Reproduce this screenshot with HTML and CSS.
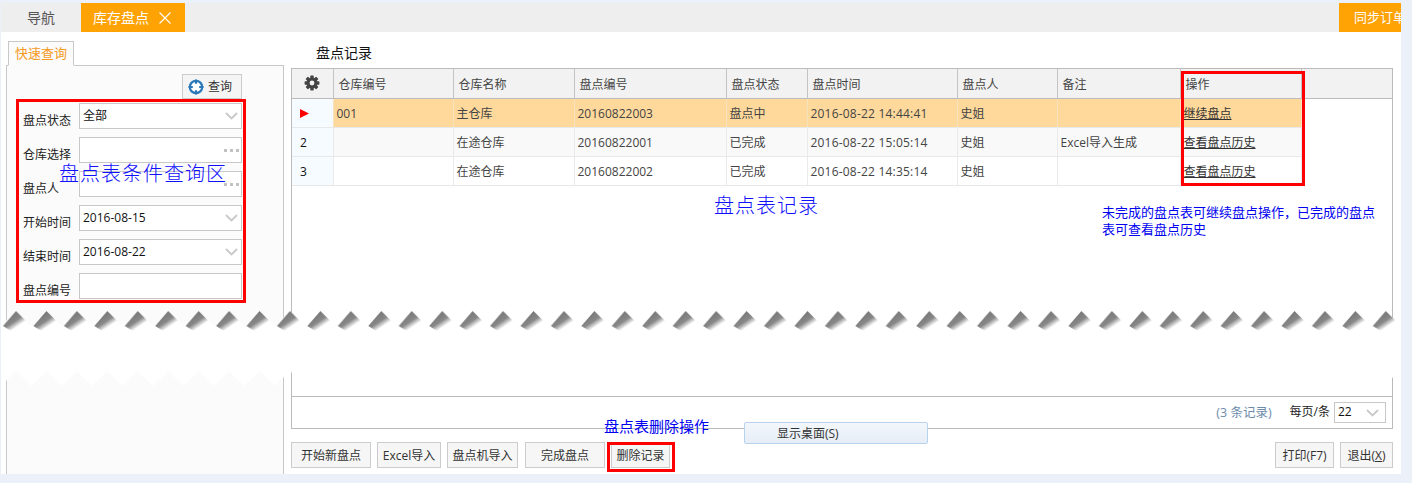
FILE: index.html
```html
<!DOCTYPE html>
<html lang="zh">
<head>
<meta charset="utf-8">
<title>库存盘点</title>
<link rel="stylesheet" href="styles.css">
</head>
<body>
<div class="app">
  <div class="tabbar">
    <div class="tab">导航</div>
    <div class="tab tab-active">库存盘点
      <svg class="tab-close" width="12" height="12" viewBox="0 0 12 12"><path d="M.5.5l11 11M11.5.5l-11 11" stroke="#fff" stroke-width="1.1" fill="none"/></svg>
    </div>
    <div class="tab-sync">同步订单</div>
  </div>
  <div class="main">
    <div class="side">
      <div class="side-tab">快速查询</div>
      <div class="side-panel">
        <div class="query-row">
          <div class="query-btn">
            <svg width="16" height="16" viewBox="0 0 16 16"><circle cx="8" cy="8" r="6.200" fill="#fff" stroke="#2a78b8" stroke-width="2.200"/><path d="M8 .5v4.300M8 11.200v4.300M.5 8h4.300M11.200 8h4.300" stroke="#2a78b8" stroke-width="2.200"/></svg>
            <span class="query-label">查询</span>
          </div>
        </div>
        <div class="form">
          <div class="field"><label>盘点状态</label><div class="input">全部<svg class="chev" width="13" height="8" viewBox="0 0 13 8"><path d="M1 1l5.500 5.500L12 1" stroke="#c9c9c9" stroke-width="1.800" fill="none"/></svg></div></div>
          <div class="field"><label>仓库选择</label><div class="input"><span class="dots"></span></div></div>
          <div class="field"><label>盘点人</label><div class="input"><span class="dots"></span></div></div>
          <div class="field"><label>开始时间</label><div class="input">2016-08-15<svg class="chev" width="13" height="8" viewBox="0 0 13 8"><path d="M1 1l5.500 5.500L12 1" stroke="#c9c9c9" stroke-width="1.800" fill="none"/></svg></div></div>
          <div class="field"><label>结束时间</label><div class="input">2016-08-22<svg class="chev" width="13" height="8" viewBox="0 0 13 8"><path d="M1 1l5.500 5.500L12 1" stroke="#c9c9c9" stroke-width="1.800" fill="none"/></svg></div></div>
          <div class="field"><label>盘点编号</label><div class="input"></div></div>
        </div>
      </div>
    </div>
    <div class="content">
      <div class="title">盘点记录</div>
      <div class="grid">
        <table class="records">
          <colgroup>
            <col class="c-idx"><col class="c-code"><col class="c-name"><col class="c-no"><col class="c-state"><col class="c-time"><col class="c-man"><col class="c-note"><col class="c-op"><col class="c-rest">
          </colgroup>
          <thead>
            <tr>
              <th class="gear-cell"><svg width="16" height="16" viewBox="0 0 16 16"><g fill="#444"><circle cx="8" cy="8" r="5.500"/><rect x="6.300" y="0.600" width="3.400" height="14.800" rx=".6"/><rect x="6.300" y="0.600" width="3.400" height="14.800" rx=".6" transform="rotate(45 8 8)"/><rect x="6.300" y="0.600" width="3.400" height="14.800" rx=".6" transform="rotate(90 8 8)"/><rect x="6.300" y="0.600" width="3.400" height="14.800" rx=".6" transform="rotate(135 8 8)"/></g><circle cx="8" cy="8" r="2.400" fill="#f2f2f2"/></svg></th>
              <th>仓库编号</th><th>仓库名称</th><th>盘点编号</th><th>盘点状态</th><th>盘点时间</th><th>盘点人</th><th>备注</th><th>操作</th><th></th>
            </tr>
          </thead>
          <tbody>
            <tr class="row-current">
              <td class="idx"><svg width="9" height="9" viewBox="0 0 9 9"><path d="M0 0l9 4.500L0 9z" fill="#f00"/></svg></td>
              <td>001</td><td>主仓库</td><td>20160822003</td><td>盘点中</td><td class="stamp">2016-08-22 14:44:41</td><td>史姐</td><td></td><td><a class="op">继续盘点</a></td><td class="rest"></td>
            </tr>
            <tr class="row-alt">
              <td class="idx">2</td>
              <td></td><td>在途仓库</td><td>20160822001</td><td>已完成</td><td class="stamp">2016-08-22 15:05:14</td><td>史姐</td><td>Excel导入生成</td><td><a class="op">查看盘点历史</a></td><td class="rest"></td>
            </tr>
            <tr>
              <td class="idx">3</td>
              <td></td><td>在途仓库</td><td>20160822002</td><td>已完成</td><td class="stamp">2016-08-22 14:35:14</td><td>史姐</td><td></td><td><a class="op">查看盘点历史</a></td><td class="rest"></td>
            </tr>
          </tbody>
        </table>
        <div class="grid-foot">
          <span class="count">(3 条记录)</span>
          <span class="per">每页/条</span>
          <div class="pager">22<svg width="13" height="8" viewBox="0 0 13 8"><path d="M1 1l5.500 5.500L12 1" stroke="#c9c9c9" stroke-width="1.800" fill="none"/></svg></div>
        </div>
      </div>
      <div class="actions">
        <div class="btn b-new">开始新盘点</div>
        <div class="btn b-excel">Excel导入</div>
        <div class="btn b-pda">盘点机导入</div>
        <div class="btn b-done">完成盘点</div>
        <div class="btn b-del">删除记录</div>
        <div class="btn b-print">打印(F7)</div>
        <div class="btn b-exit">退出(<u>X</u>)</div>
      </div>
    </div>
  </div>

  <div class="mark mark-form"></div>
  <div class="mark mark-op"></div>
  <div class="mark mark-del"></div>

  <div class="note note-form">盘点表条件查询区</div>
  <div class="note note-grid">盘点表记录</div>
  <div class="note note-op">未完成的盘点表可继续盘点操作&#xFF0C;已完成的盘点表可查看盘点历史</div>
  <div class="note note-del">盘点表删除操作</div>

  <div class="tip">显示桌面(S)</div>

  <svg class="tear" width="1400" height="78" viewBox="0 0 1400 78">
    <defs>
      <linearGradient id="shade" gradientUnits="userSpaceOnUse" x1="13" y1="0" x2="21.400" y2="12.500">
        <stop offset="0" stop-color="#747474"/>
        <stop offset=".6" stop-color="#888"/>
        <stop offset="1" stop-color="#fff"/>
      </linearGradient>
      <pattern id="teeth" width="30.44" height="78" patternUnits="userSpaceOnUse" x="-0.2">
        <polygon points="0,15 15.220,0 30.440,15 30.440,75 15.220,60 0,75" fill="#fff"/>
        <polygon points="15.220,0 25.200,10 10.200,20 2.200,15" fill="url(#shade)"/>
      </pattern>
    </defs>
    <rect width="1400" height="78" fill="url(#teeth)"/>
  </svg>
</div>
</body>
</html>
```

FILE: styles.css
```css
* { box-sizing: border-box; }
html, body { margin: 0; height: 100%; }
body {
  background: #ecf1f9;
  padding: 3px 0 0 1px;
  overflow: hidden;
  font: 12px/1.2 "Open Sans", "Noto Sans CJK SC", sans-serif;
  color: #333;
}
.app {
  position: relative;
  width: 1400px;
  height: 471px;
  background: #fff;
  display: flex;
  flex-direction: column;
}

/* tab bar */
.tabbar {
  height: 29px;
  flex: none;
  display: flex;
  background: #efeeef;
  font-size: 14px;
  line-height: 29px;
}
.tab { width: 80px; padding-left: 26px; color: #555; }
.tab-active {
  width: 104px;
  padding-left: 12px;
  background: #ffa305;
  color: #fff;
  display: flex;
  align-items: center;
  gap: 10px;
}
.tab-close { flex: none; }
.tab-sync {
  margin-left: auto;
  width: 62px;
  padding-left: 15px;
  background: #ffa305;
  color: #fff;
  overflow: hidden;
  white-space: nowrap;
  font-size: 13px;
}

/* layout */
.main {
  flex: 1;
  min-height: 0;
  display: flex;
  padding: 9px 0 0 5px;
}

/* side */
.side { width: 278px; flex: none; display: flex; flex-direction: column; }
.side-tab {
  width: 66px;
  height: 25px;
  margin-left: 2px;
  margin-bottom: -1px;
  position: relative;
  z-index: 1;
  border: 1px solid #c8c8c8;
  border-bottom-color: #fbfbfb;
  background: #fbfbfb;
  color: #f59a23;
  font-size: 13px;
  line-height: 23px;
  text-align: center;
}
.side-panel {
  flex: 1;
  background: #fbfbfb;
  border: 1px solid #c8c8c8;
  border-bottom: 0;
  padding: 8px 41px 0 16px;
}
.query-row { display: flex; justify-content: flex-end; height: 29px; }
.query-btn {
  width: 60px;
  height: 25px;
  border: 1px solid #ccc;
  background: #f5f5f5;
  display: flex;
  align-items: center;
  gap: 4px;
  padding-left: 5px;
}
.query-label { padding-top: 2px; }
.field { display: flex; height: 26px; margin-bottom: 8px; }
.field label { width: 56px; flex: none; color: #222; padding-top: 11px; }
.input {
  flex: 1;
  position: relative;
  display: flex;
  align-items: center;
  justify-content: space-between;
  padding: 0 3px;
  border: 1px solid #c8c8c8;
  background: #fff;
  color: #111;
}
.dots {
  position: absolute;
  right: 2px;
  top: 11px;
  width: 15px;
  height: 3px;
  background: radial-gradient(circle at 1.5px 1.5px, #c0c0c0 1.400px, transparent 1.600px) 0 0 / 6px 3px repeat-x;
}

/* content */
.content {
  margin-left: 7px;
  width: 1102px;
  flex: none;
  display: flex;
  flex-direction: column;
  padding-bottom: 6px;
}
.title {
  height: 27px;
  padding: 4px 0 0 25px;
  font-size: 14px;
  color: #111;
}
.grid {
  flex: 1;
  min-height: 0;
  border: 1px solid #bbb;
  display: flex;
  flex-direction: column;
  justify-content: space-between;
}
.records {
  width: 1100px;
  table-layout: fixed;
  border-collapse: collapse;
}
.c-idx { width: 41px; }
.c-code { width: 120px; }
.c-name { width: 121px; }
.c-no { width: 152px; }
.c-state { width: 81px; }
.c-time { width: 150px; }
.c-man { width: 100px; }
.c-note { width: 123px; }
.c-op { width: 121px; }
.c-rest { width: 91px; }

.records th {
  height: 29px;
  padding: 4px 0 0 5px;
  background: #f2f2f2;
  border-right: 1px solid #c4c4c4;
  border-bottom: 1px solid #bbb;
  font-weight: 400;
  text-align: left;
  color: #444;
}
.records th:last-child { border-right: 0; }
.records th.gear-cell { text-align: center; padding: 3px 0 0; }
.records td {
  height: 29px;
  padding: 4px 0 0 3px;
  border-right: 1px solid #eaeaea;
  border-bottom: 1px solid #e8e8e8;
  color: #444;
  white-space: nowrap;
}
.records td.idx { background: #f5fbff; color: #111; padding-left: 8px; }
.records td.stamp { letter-spacing: .2px; }
.row-current td { background: #ffd99b; border-right-color: #f5e3c0; border-top: 1px solid #fff; }
.row-alt td { background: #f9f9f9; }
.records td.rest { background: #fff; border: 0; }
.op { color: #333; text-decoration: underline; }

.grid-foot {
  height: 32px;
  flex: none;
  border-top: 1px solid #bbb;
  display: flex;
  align-items: center;
  justify-content: flex-end;
  padding-right: 6px;
}
.count { color: #6d8cab; margin-right: 18px; font-size: 12.500px; }
.per { color: #222; margin-right: 4px; }
.pager {
  width: 52px;
  height: 21px;
  border: 1px solid #c8c8c8;
  display: flex;
  align-items: center;
  justify-content: space-between;
  padding: 0 6px 0 3px;
  color: #111;
}

/* actions */
.actions {
  flex: none;
  margin-top: 13px;
  display: flex;
  gap: 6px;
}
.btn {
  height: 26px;
  padding-top: 2px;
  border: 1px solid #ccc;
  background: #f6f6f6;
  display: flex;
  align-items: center;
  justify-content: center;
  color: #333;
}
.b-new { width: 80px; }
.b-excel { width: 64px; }
.b-pda { width: 71px; }
.b-done { width: 80px; margin-left: 1px; }
.b-del { width: 59px; }
.b-print { width: 59px; margin-left: auto; }
.b-exit { width: 53px; }

/* overlays */
.mark { position: absolute; border: 3px solid #f00; }
.mark-form { left: 15px; top: 96px; width: 230px; height: 204px; }
.mark-op { left: 1180px; top: 68px; width: 124px; height: 115px; }
.mark-del { left: 606px; top: 439px; width: 68px; height: 30px; }

.note { position: absolute; color: #0000f0; z-index: 2; white-space: nowrap; }
.note-form { left: 58px; top: 159px; font-size: 20px; font-weight: 300; letter-spacing: 1px; color: #1010ff; }
.note-grid { left: 713px; top: 191px; font-size: 20px; font-weight: 300; letter-spacing: 1px; color: #1010ff; }
.note-op {
  left: 1101px;
  top: 201px;
  width: 276px;
  white-space: normal;
  font-size: 13px;
  line-height: 17px;
}
.note-del { left: 603px; top: 414px; font-size: 15px; }

.tip {
  position: absolute;
  left: 743px;
  top: 419px;
  width: 184px;
  height: 22px;
  padding: 4px 0 0 32px;
  border: 1px solid #b9d2ee;
  border-radius: 2px;
  background: linear-gradient(#f3f7fc, #e6edf6);
  color: #333;
  z-index: 2;
}
.tear { position: absolute; left: 0; top: 308px; display: block; z-index: 3; }
```
